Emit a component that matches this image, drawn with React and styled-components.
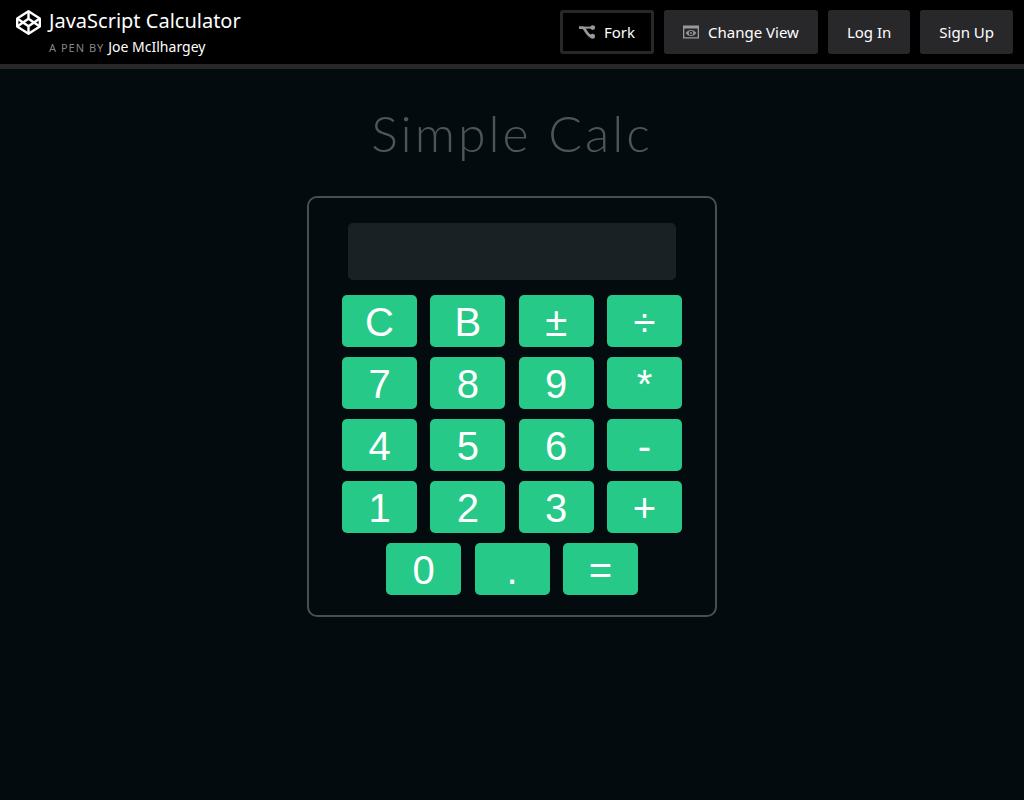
import React, { useState } from "react";
import styled, { createGlobalStyle, css } from "styled-components";

const GlobalStyle = createGlobalStyle`
  *, *::before, *::after { box-sizing: border-box; }
  body {
    margin: 0;
    background: #030b0e;
    font-family: "Liberation Sans", Helvetica, Arial, sans-serif;
  }
`;

const Header = styled.header`
  display: flex;
  justify-content: space-between;
  align-items: flex-start;
  padding: 10px 11px 6px 16px;
  background: #000;
  border-bottom: 5px solid #28282b;
  font-family: "Noto Sans", "Open Sans", sans-serif;
  color: #fff;
`;

const PenInfo = styled.div`
  display: flex;
  gap: 8px;
`;

const Logo = styled.svg`
  width: 25px;
  height: 25px;
  fill: none;
  stroke: #fff;
  stroke-width: 2.4;
  stroke-linejoin: round;
`;

const PenTitle = styled.h1`
  margin: 0;
  font-size: 20px;
  line-height: 22px;
  font-weight: 400;
`;

const Byline = styled.p`
  display: flex;
  align-items: baseline;
  gap: 4px;
  margin: 5px 0 0;
  font-size: 11px;
  line-height: 20px;
  letter-spacing: 1px;
  color: #858585;
`;

const Author = styled.a`
  font-size: 14px;
  letter-spacing: 0;
  color: #fff;
  text-decoration: none;
`;

const Actions = styled.nav`
  display: flex;
  gap: 10px;
`;

const buttonLook = css`
  display: flex;
  align-items: center;
  gap: 8px;
  height: 44px;
  padding: 0 16px;
  border: 3px solid #28282b;
  border-radius: 3px;
  background: ${(p) => (p.$outline ? "#000" : "#28282b")};
  color: #fff;
  font-family: inherit;
  font-size: 15px;
  text-decoration: none;
  white-space: nowrap;
  cursor: pointer;
`;

const ActionButton = styled.button`
  ${buttonLook}
`;

const ActionLink = styled.a`
  ${buttonLook}
`;

const Icon = styled.svg`
  width: 17px;
  height: 14px;
  color: #999;
`;

const Main = styled.main`
  display: flex;
  flex-direction: column;
  align-items: center;
  padding: 34px 0 40px;
`;

const Heading = styled.h2`
  margin: 0 0 33px;
  font-family: Lato, sans-serif;
  font-size: 50px;
  line-height: 60px;
  font-weight: 300;
  letter-spacing: 3px;
  color: #4c5659;
`;

const Calculator = styled.section`
  display: flex;
  flex-direction: column;
  align-items: center;
  gap: 10px;
  width: 40%;
  min-width: 380px;
  padding: 25px 10px 20px;
  border: 2px solid #464f52;
  border-radius: 10px;
`;

const Display = styled.input`
  width: 328px;
  height: 57px;
  margin-bottom: 5px;
  padding: 0 10px;
  border: 0;
  border-radius: 5px;
  outline: 0;
  background: #1a2124;
  color: #fff;
  font-family: inherit;
  font-size: 40px;
  text-align: right;
`;

const KeyRow = styled.div`
  display: flex;
  justify-content: space-between;
  width: ${(p) => (p.$short ? "252px" : "340px")};
`;

const Key = styled.button`
  width: 75px;
  height: 52px;
  padding: 2px 0 0;
  border: 0;
  border-radius: 5px;
  background: #26c987;
  color: #fff;
  font-family: inherit;
  font-size: 40px;
  line-height: 50px;
  text-align: center;
  cursor: pointer;
`;

const rows = [
  ["C", "B", "±", "÷"],
  ["7", "8", "9", "*"],
  ["4", "5", "6", "-"],
  ["1", "2", "3", "+"],
  ["0", ".", "="],
];

function evaluate(text) {
  const parts = text.match(/(?:^-)?[\d.]+|[÷*+-]/g) || [];
  const terms = [Number(parts[0] || 0)];
  for (let i = 1; i + 1 < parts.length; i += 2) {
    const n = Number(parts[i + 1]);
    if (parts[i] === "*") terms.push(terms.pop() * n);
    else if (parts[i] === "÷") terms.push(terms.pop() / n);
    else terms.push(parts[i] === "-" ? -n : n);
  }
  return String(terms.reduce((a, b) => a + b, 0));
}

function press(value, key) {
  if (key === "C") return "";
  if (key === "B") return value.slice(0, -1);
  if (key === "±") return value.startsWith("-") ? value.slice(1) : "-" + value;
  if (key === "=") return evaluate(value);
  return value + key;
}

function ForkIcon() {
  return (
    <Icon viewBox="0 0 17 14" aria-hidden="true">
      <path d="M0 2.6H3.5C6.5 2.6 7.5 11.2 13 11.4" fill="none" stroke="currentColor" strokeWidth="2.6" />
      <path d="M4 2.6H13" fill="none" stroke="currentColor" strokeWidth="2" />
      <circle cx="13.7" cy="2.6" r="2.4" fill="currentColor" />
      <circle cx="13.5" cy="11.2" r="2.5" fill="currentColor" />
    </Icon>
  );
}

function ViewIcon() {
  return (
    <Icon viewBox="0 0 17 14" aria-hidden="true">
      <path d="M0 0.5H16V13.5H0ZM1.3 3.5V12.2H14.7V3.5Z" fill="currentColor" fillRule="evenodd" />
      <path d="M2.8 8C5 4 11 4 13.2 8C11 12 5 12 2.8 8Z" fill="currentColor" />
      <circle cx="8" cy="8" r="2.3" fill="#28282b" />
      <circle cx="8" cy="8" r="1" fill="currentColor" />
    </Icon>
  );
}

export default function App() {
  const [value, setValue] = useState("");
  return (
    <>
      <GlobalStyle />
      <Header>
        <PenInfo>
          <Logo viewBox="0 0 25 25" aria-hidden="true">
            <path d="M12.5 1.3L23.8 8.5V16.5L12.5 23.7L1.2 16.5V8.5Z" />
            <path d="M12.5 1.3V8.7M12.5 16.3V23.7M1.2 8.5L12.5 16.3L23.8 8.5M1.2 16.5L12.5 8.7L23.8 16.5" />
          </Logo>
          <div>
            <PenTitle>JavaScript Calculator</PenTitle>
            <Byline>
              A PEN BY <Author href="#author">Joe McIlhargey</Author>
            </Byline>
          </div>
        </PenInfo>
        <Actions>
          <ActionButton type="button" $outline>
            <ForkIcon />
            Fork
          </ActionButton>
          <ActionButton type="button">
            <ViewIcon />
            Change View
          </ActionButton>
          <ActionLink href="#login">Log In</ActionLink>
          <ActionLink href="#signup">Sign Up</ActionLink>
        </Actions>
      </Header>
      <Main>
        <Heading>Simple Calc</Heading>
        <Calculator>
          <Display type="text" aria-label="Result" readOnly value={value} />
          {rows.map((keys) => (
            <KeyRow key={keys[0]} $short={keys.length === 3}>
              {keys.map((k) => (
                <Key key={k} type="button" onClick={() => setValue(press(value, k))}>
                  {k}
                </Key>
              ))}
            </KeyRow>
          ))}
        </Calculator>
      </Main>
    </>
  );
}
